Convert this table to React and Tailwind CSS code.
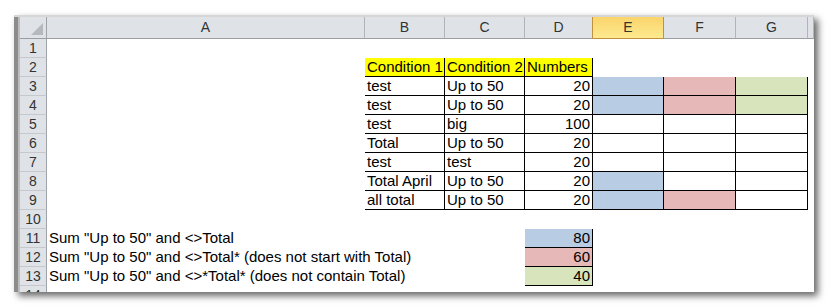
import React from 'react';

const COLS = ['A', 'B', 'C', 'D', 'E', 'F', 'G', ''];

const BLUE = 'bg-[#b8cce4]';
const PINK = 'bg-[#e6b8b7]';
const GREEN = 'bg-[#d8e4bc]';
const YELLOW = 'bg-[#ffff00]';

// cell contents per row (index 0 = column A)
const ROWS = {
  2: [null, { t: 'Condition 1', bg: YELLOW }, { t: 'Condition 2', bg: YELLOW }, { t: 'Numbers', bg: YELLOW }],
  3: [null, { t: 'test' }, { t: 'Up to 50' }, { t: '20', n: true }, { bg: BLUE }, { bg: PINK }, { bg: GREEN }],
  4: [null, { t: 'test' }, { t: 'Up to 50' }, { t: '20', n: true }, { bg: BLUE }, { bg: PINK }, { bg: GREEN }],
  5: [null, { t: 'test' }, { t: 'big' }, { t: '100', n: true }],
  6: [null, { t: 'Total' }, { t: 'Up to 50' }, { t: '20', n: true }],
  7: [null, { t: 'test' }, { t: 'test' }, { t: '20', n: true }],
  8: [null, { t: 'Total April' }, { t: 'Up to 50' }, { t: '20', n: true }, { bg: BLUE }],
  9: [null, { t: 'all total' }, { t: 'Up to 50' }, { t: '20', n: true }, { bg: BLUE }, { bg: PINK }],
  11: [{ t: 'Sum "Up to 50" and <>Total' }, null, null, { t: '80', n: true, bg: BLUE }],
  12: [{ t: 'Sum "Up to 50" and <>Total* (does not start with Total)' }, null, null, { t: '60', n: true, bg: PINK }],
  13: [{ t: 'Sum "Up to 50" and <>*Total* (does not contain Total)' }, null, null, { t: '40', n: true, bg: GREEN }],
};

// which cells carry the black table border (c: 0 = A)
function boxed(r, c) {
  if (r === 2) return c >= 1 && c <= 3;
  if (r >= 3 && r <= 9) return c >= 1 && c <= 6;
  if (r >= 11 && r <= 13) return c === 3;
  return false;
}

function Cell({ r, c }) {
  const data = (ROWS[r] || [])[c];
  const right = boxed(r, c) || boxed(r, c + 1);
  const bottom = boxed(r, c) || boxed(r + 1, c);
  return (
    <div
      className={[
        'box-border h-[19px] leading-[18px] whitespace-nowrap text-black',
        right ? 'border-r border-black' : 'border-r border-transparent',
        bottom ? 'border-b border-black' : 'border-b border-transparent',
        data?.bg || '',
        data?.n ? 'text-right pr-[2px]' : 'pl-[2px]',
      ].join(' ')}
    >
      {data?.t}
    </div>
  );
}

function RowHead({ n }) {
  return (
    <div className="box-border h-[19px] leading-[18px] bg-[#dfe3e8] border-r border-b border-r-[#9ea3a9] border-b-[#c5c9ce] text-center text-[14px] text-[#333]">
      {n}
    </div>
  );
}

export default function App() {
  const rows = Array.from({ length: 14 }, (_, i) => i + 1);
  return (
    <div className="w-[829px] h-[307px] bg-white pl-[14px] pt-[15px]">
      <div className="flex w-[800px] h-[277px] overflow-hidden bg-white border-t-2 border-[#d6d6d6] shadow-[4px_4px_7px_rgba(0,0,0,0.6)] font-['Liberation_Sans',Arial,sans-serif] text-[15px]">
        <div className="w-[4px] shrink-0 bg-[#8c8c8c]" />
        <div className="w-[2px] shrink-0 bg-[#bcbcbc]" />
        <div className="grid flex-1 grid-cols-[27px_318px_80px_80px_68px_71px_72px_72px_1fr] auto-rows-min content-start">
          {/* column header row */}
          <div className="box-border h-[22px] bg-[#dfe3e8] border-r border-b border-r-[#9ea3a9] border-b-[#9a9ea3] flex items-end justify-end p-[3px]">
            <svg width="12" height="12" viewBox="0 0 12 12">
              <polygon points="12,0 12,12 0,12" fill="#b5b9be" />
            </svg>
          </div>
          {COLS.map((l, i) =>
            l === 'E' ? (
              <div
                key={i}
                className="box-border h-[22px] leading-[21px] bg-gradient-to-b from-[#f9d46a] to-[#fee98f] border-r border-b border-r-[#c2913e] border-b-[#c2913e] text-center text-[14px] text-[#333]"
              >
                {l}
              </div>
            ) : (
              <div
                key={i}
                className={`box-border h-[22px] leading-[21px] bg-[#dfe3e8] border-r border-b border-b-[#9a9ea3] ${
                  l === 'D' ? 'border-r-[#c2913e]' : 'border-r-[#b1b5ba]'
                } text-center text-[14px] text-[#333]`}
              >
                {l}
              </div>
            )
          )}
          {rows.map((r) => (
            <React.Fragment key={r}>
              <RowHead n={r} />
              {COLS.map((_, c) => (
                <Cell key={c} r={r} c={c} />
              ))}
            </React.Fragment>
          ))}
        </div>
      </div>
    </div>
  );
}
